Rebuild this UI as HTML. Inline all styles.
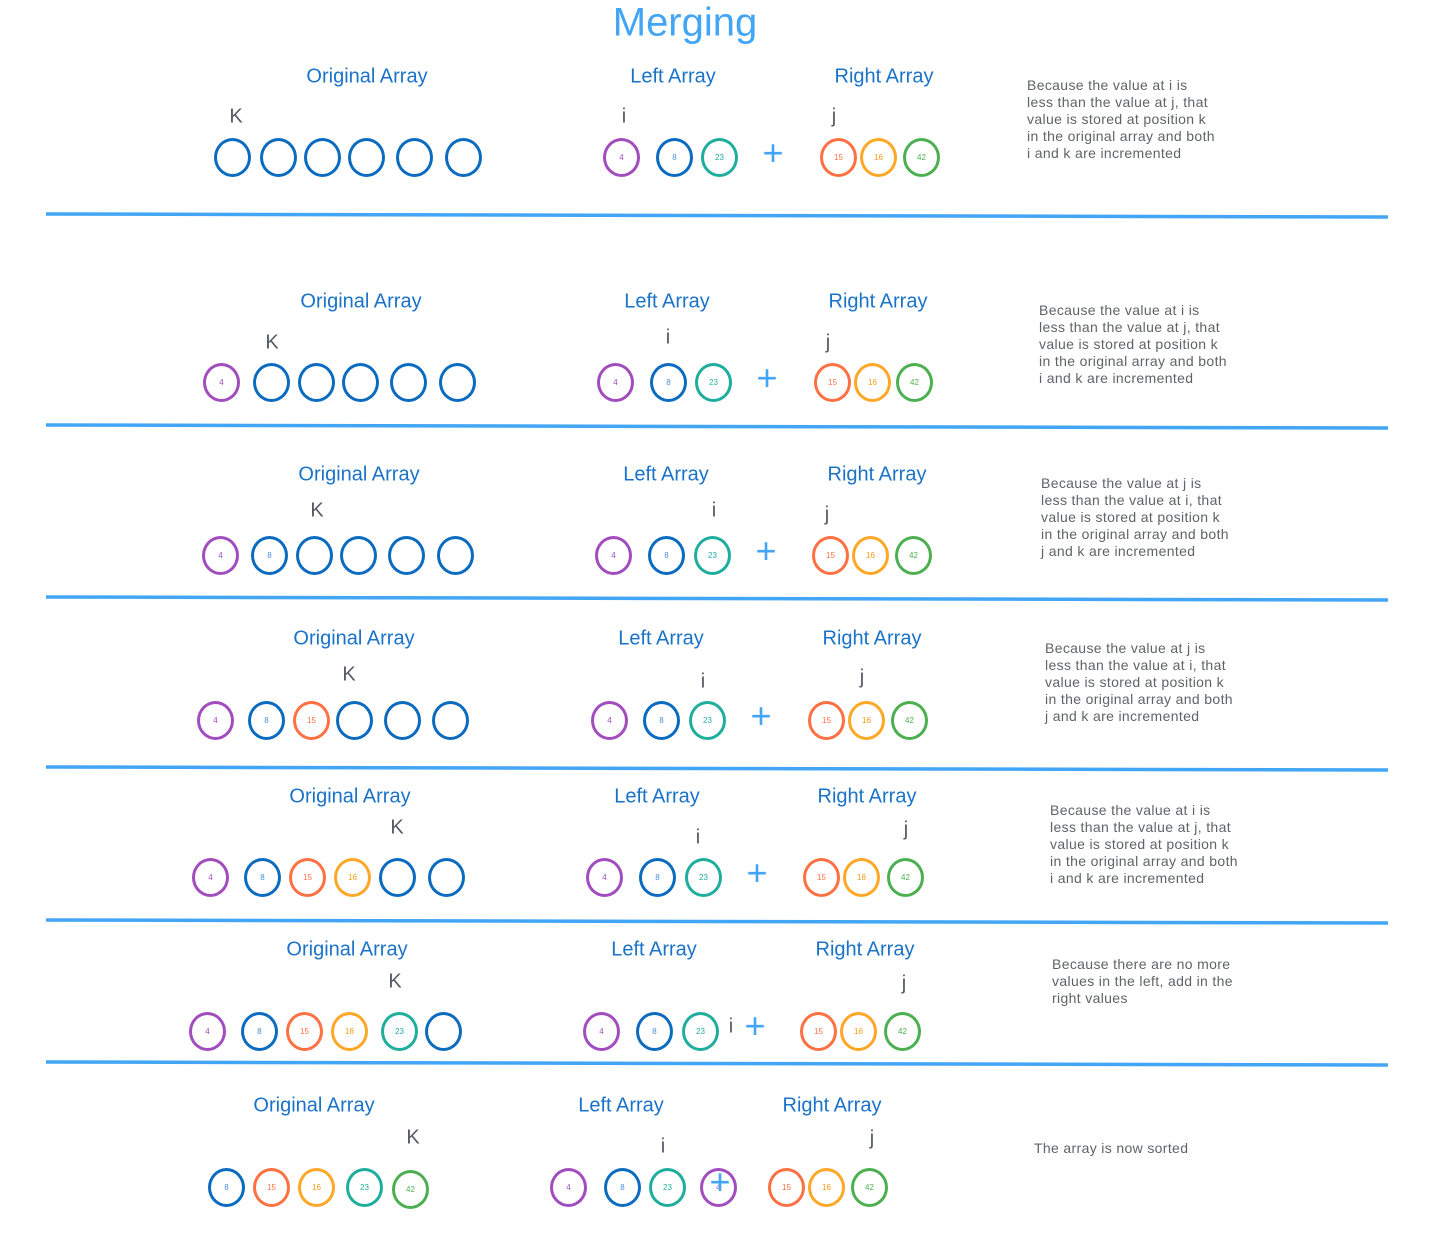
<!DOCTYPE html>
<html><head><meta charset="utf-8"><style>
html,body{margin:0;padding:0;background:#fff;width:1444px;height:1236px;overflow:hidden;position:relative;font-family:"Liberation Sans",sans-serif}
.t{position:absolute;transform:translate(-50%,-50%);white-space:nowrap}
.h{color:#1a73c8;font-size:20px}
.l{color:#555a66;font-size:20px}
.p{color:#42a5f5;font-size:36px;font-weight:300}
.c{position:absolute;width:31px;height:33px;border:3px solid #0a6cc2;border-radius:50%;margin:-19px 0 0 -18px;font-size:8px;display:flex;align-items:center;justify-content:center;box-sizing:content-box}
.b{border-color:#0b6bbf;color:#4a90d9}.u{border-color:#a24dbe;color:#a24dbe}.e{border-color:#1fae9e;color:#1fae9e}
.o{border-color:#ff7043;color:#ff7043}.a{border-color:#ffa726;color:#f59a10}.g{border-color:#4caf50;color:#4caf50}
.d{position:absolute;color:#5f6368;font-size:14px;line-height:17px;white-space:nowrap;letter-spacing:0.35px}
</style></head><body>
<svg width="1444" height="1236" style="position:absolute;left:0;top:0">
<g stroke="#42a5f5" stroke-width="3.5">
<line x1="46" y1="214" x2="1388" y2="217"/>
<line x1="46" y1="425" x2="1388" y2="428"/>
<line x1="46" y1="597" x2="1388" y2="600"/>
<line x1="46" y1="767" x2="1388" y2="770"/>
<line x1="46" y1="920" x2="1388" y2="923"/>
<line x1="46" y1="1062" x2="1388" y2="1065"/>
</g></svg>
<div class="t" style="left:685px;top:23px;color:#42a5f5;font-size:40px">Merging</div>

<!-- Row 1 -->
<div class="t h" style="left:367px;top:77px">Original Array</div>
<div class="t h" style="left:673px;top:77px">Left Array</div>
<div class="t h" style="left:884px;top:77px">Right Array</div>
<div class="t l" style="left:236px;top:117px">K</div>
<div class="t l" style="left:624px;top:117px">i</div>
<div class="t l" style="left:834px;top:117px">j</div>
<div class="c b" style="left:232px;top:157px"></div><div class="c b" style="left:278px;top:157px"></div><div class="c b" style="left:322px;top:157px"></div><div class="c b" style="left:366px;top:157px"></div><div class="c b" style="left:414px;top:157px"></div><div class="c b" style="left:463px;top:157px"></div>
<div class="c u" style="left:621px;top:157px">4</div><div class="c b" style="left:674px;top:157px">8</div><div class="c e" style="left:719px;top:157px">23</div>
<div class="t p" style="left:773px;top:153px">+</div>
<div class="c o" style="left:838px;top:157px">15</div><div class="c a" style="left:878px;top:157px">16</div><div class="c g" style="left:921px;top:157px">42</div>
<div class="d" style="left:1027px;top:77px">Because the value at i is<br>less than the value at j, that<br>value is stored at position k<br>in the original array and both<br>i and k are incremented</div>

<!-- Row 2 -->
<div class="t h" style="left:361px;top:302px">Original Array</div>
<div class="t h" style="left:667px;top:302px">Left Array</div>
<div class="t h" style="left:878px;top:302px">Right Array</div>
<div class="t l" style="left:272px;top:343px">K</div>
<div class="t l" style="left:668px;top:338px">i</div>
<div class="t l" style="left:828px;top:343px">j</div>
<div class="c u" style="left:221px;top:382px">4</div><div class="c b" style="left:271px;top:382px"></div><div class="c b" style="left:316px;top:382px"></div><div class="c b" style="left:360px;top:382px"></div><div class="c b" style="left:408px;top:382px"></div><div class="c b" style="left:457px;top:382px"></div>
<div class="c u" style="left:615px;top:382px">4</div><div class="c b" style="left:668px;top:382px">8</div><div class="c e" style="left:713px;top:382px">23</div>
<div class="t p" style="left:767px;top:378px">+</div>
<div class="c o" style="left:832px;top:382px">15</div><div class="c a" style="left:872px;top:382px">16</div><div class="c g" style="left:914px;top:382px">42</div>
<div class="d" style="left:1039px;top:302px">Because the value at i is<br>less than the value at j, that<br>value is stored at position k<br>in the original array and both<br>i and k are incremented</div>

<!-- Row 3 -->
<div class="t h" style="left:359px;top:475px">Original Array</div>
<div class="t h" style="left:666px;top:475px">Left Array</div>
<div class="t h" style="left:877px;top:475px">Right Array</div>
<div class="t l" style="left:317px;top:511px">K</div>
<div class="t l" style="left:714px;top:511px">i</div>
<div class="t l" style="left:827px;top:515px">j</div>
<div class="c u" style="left:220px;top:555px">4</div><div class="c b" style="left:269px;top:555px">8</div><div class="c b" style="left:314px;top:555px"></div><div class="c b" style="left:358px;top:555px"></div><div class="c b" style="left:406px;top:555px"></div><div class="c b" style="left:455px;top:555px"></div>
<div class="c u" style="left:613px;top:555px">4</div><div class="c b" style="left:666px;top:555px">8</div><div class="c e" style="left:712px;top:555px">23</div>
<div class="t p" style="left:766px;top:551px">+</div>
<div class="c o" style="left:830px;top:555px">15</div><div class="c a" style="left:870px;top:555px">16</div><div class="c g" style="left:913px;top:555px">42</div>
<div class="d" style="left:1041px;top:475px">Because the value at j is<br>less than the value at i, that<br>value is stored at position k<br>in the original array and both<br>j and k are incremented</div>

<!-- Row 4 -->
<div class="t h" style="left:354px;top:639px">Original Array</div>
<div class="t h" style="left:661px;top:639px">Left Array</div>
<div class="t h" style="left:872px;top:639px">Right Array</div>
<div class="t l" style="left:349px;top:675px">K</div>
<div class="t l" style="left:703px;top:682px">i</div>
<div class="t l" style="left:862px;top:678px">j</div>
<div class="c u" style="left:215px;top:720px">4</div><div class="c b" style="left:266px;top:720px">8</div><div class="c o" style="left:311px;top:720px">15</div><div class="c b" style="left:354px;top:720px"></div><div class="c b" style="left:402px;top:720px"></div><div class="c b" style="left:450px;top:720px"></div>
<div class="c u" style="left:609px;top:720px">4</div><div class="c b" style="left:661px;top:720px">8</div><div class="c e" style="left:707px;top:720px">23</div>
<div class="t p" style="left:761px;top:716px">+</div>
<div class="c o" style="left:826px;top:720px">15</div><div class="c a" style="left:866px;top:720px">16</div><div class="c g" style="left:909px;top:720px">42</div>
<div class="d" style="left:1045px;top:640px">Because the value at j is<br>less than the value at i, that<br>value is stored at position k<br>in the original array and both<br>j and k are incremented</div>

<!-- Row 5 -->
<div class="t h" style="left:350px;top:797px">Original Array</div>
<div class="t h" style="left:657px;top:797px">Left Array</div>
<div class="t h" style="left:867px;top:797px">Right Array</div>
<div class="t l" style="left:397px;top:828px">K</div>
<div class="t l" style="left:698px;top:838px">i</div>
<div class="t l" style="left:906px;top:830px">j</div>
<div class="c u" style="left:210px;top:877px">4</div><div class="c b" style="left:262px;top:877px">8</div><div class="c o" style="left:307px;top:877px">15</div><div class="c a" style="left:352px;top:877px">16</div><div class="c b" style="left:397px;top:877px"></div><div class="c b" style="left:446px;top:877px"></div>
<div class="c u" style="left:604px;top:877px">4</div><div class="c b" style="left:657px;top:877px">8</div><div class="c e" style="left:703px;top:877px">23</div>
<div class="t p" style="left:757px;top:873px">+</div>
<div class="c o" style="left:821px;top:877px">15</div><div class="c a" style="left:861px;top:877px">16</div><div class="c g" style="left:905px;top:877px">42</div>
<div class="d" style="left:1050px;top:802px">Because the value at i is<br>less than the value at j, that<br>value is stored at position k<br>in the original array and both<br>i and k are incremented</div>

<!-- Row 6 -->
<div class="t h" style="left:347px;top:950px">Original Array</div>
<div class="t h" style="left:654px;top:950px">Left Array</div>
<div class="t h" style="left:865px;top:950px">Right Array</div>
<div class="t l" style="left:395px;top:982px">K</div>
<div class="t l" style="left:731px;top:1027px">i</div>
<div class="t l" style="left:904px;top:984px">j</div>
<div class="c u" style="left:207px;top:1031px">4</div><div class="c b" style="left:259px;top:1031px">8</div><div class="c o" style="left:304px;top:1031px">15</div><div class="c a" style="left:349px;top:1031px">16</div><div class="c e" style="left:399px;top:1031px">23</div><div class="c b" style="left:443px;top:1031px"></div>
<div class="c u" style="left:601px;top:1031px">4</div><div class="c b" style="left:654px;top:1031px">8</div><div class="c e" style="left:700px;top:1031px">23</div>
<div class="t p" style="left:755px;top:1026px">+</div>
<div class="c o" style="left:818px;top:1031px">15</div><div class="c a" style="left:858px;top:1031px">16</div><div class="c g" style="left:902px;top:1031px">42</div>
<div class="d" style="left:1052px;top:956px">Because there are no more<br>values in the left, add in the<br>right values</div>

<!-- Row 7 -->
<div class="t h" style="left:314px;top:1106px">Original Array</div>
<div class="t h" style="left:621px;top:1106px">Left Array</div>
<div class="t h" style="left:832px;top:1106px">Right Array</div>
<div class="t l" style="left:413px;top:1138px">K</div>
<div class="t l" style="left:663px;top:1147px">i</div>
<div class="t l" style="left:872px;top:1139px">j</div>
<div class="c b" style="left:226px;top:1187px">8</div><div class="c o" style="left:271px;top:1187px">15</div><div class="c a" style="left:316px;top:1187px">16</div><div class="c e" style="left:364px;top:1187px">23</div><div class="c g" style="left:410px;top:1189px">42</div>
<div class="c u" style="left:568px;top:1187px">4</div><div class="c b" style="left:622px;top:1187px">8</div><div class="c e" style="left:667px;top:1187px">23</div><div class="c u" style="left:718px;top:1187px">4</div>
<div class="t p" style="left:720px;top:1182px">+</div>
<div class="c o" style="left:786px;top:1187px">15</div><div class="c a" style="left:826px;top:1187px">16</div><div class="c g" style="left:869px;top:1187px">42</div>
<div class="d" style="left:1034px;top:1140px">The array is now sorted</div>
</body></html>
